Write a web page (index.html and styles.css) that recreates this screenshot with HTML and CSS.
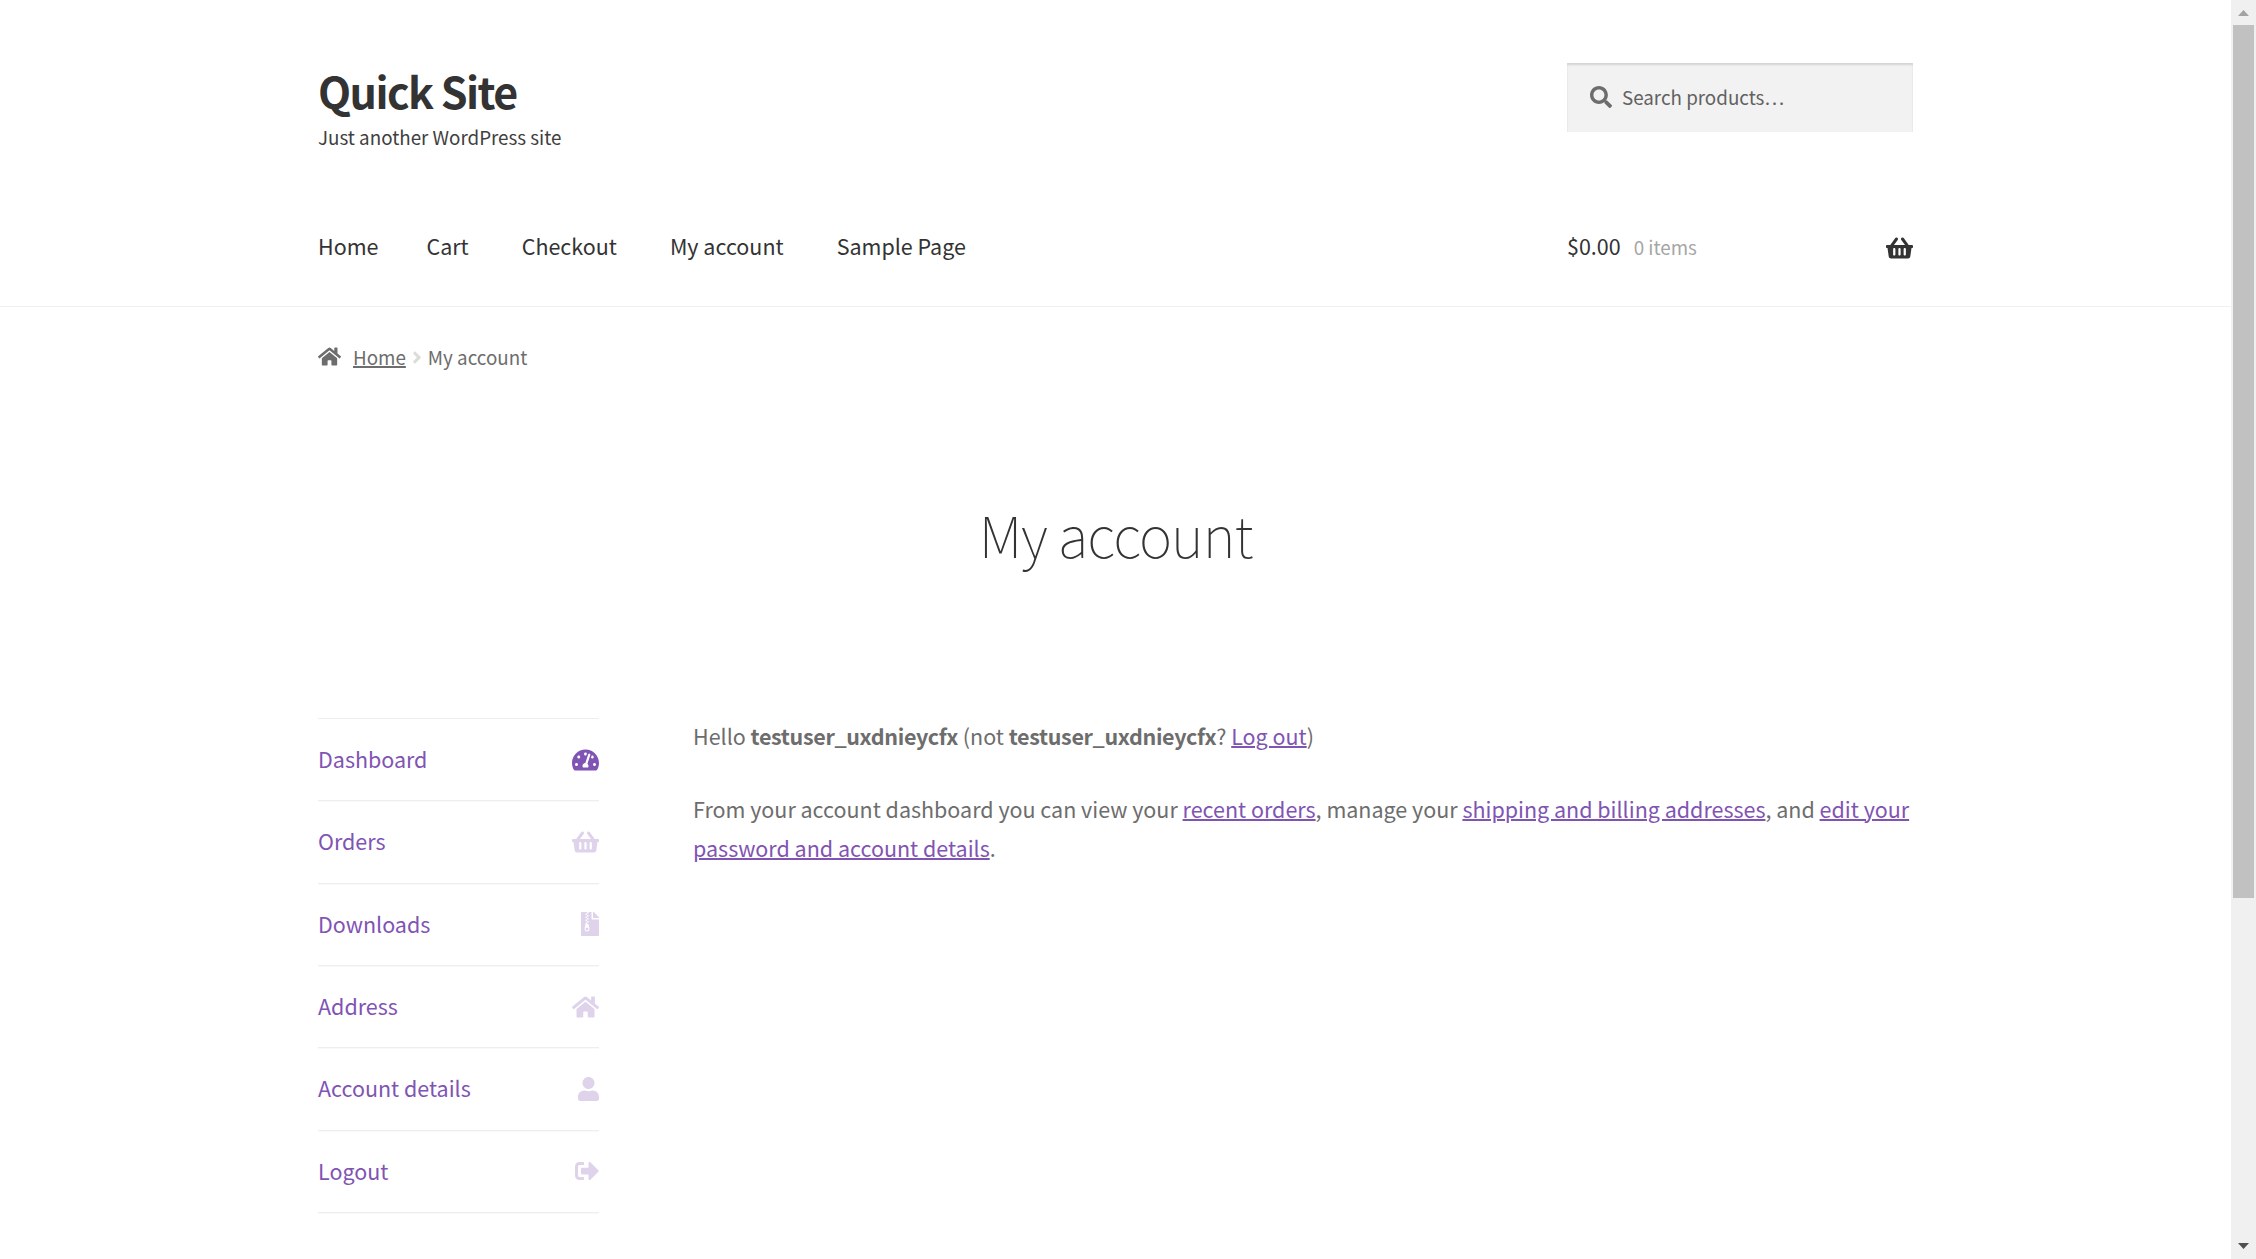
FILE: index.html
```html
<!DOCTYPE html>
<html lang="en">
<head>
<meta charset="utf-8">
<title>My account – Quick Site</title>
<link rel="stylesheet" href="styles.css">
</head>
<body>
<svg class="sprite" aria-hidden="true">
  <symbol id="search" viewBox="0 0 512 512"><path d="M505 442.7L405.3 343c-4.5-4.5-10.6-7-17-7H372c27.6-35.3 44-79.7 44-128C416 93.1 322.9 0 208 0S0 93.1 0 208s93.1 208 208 208c48.3 0 92.7-16.4 128-44v16.3c0 6.4 2.5 12.5 7 17l99.7 99.7c9.4 9.4 24.6 9.4 33.9 0l28.3-28.3c9.4-9.4 9.4-24.6.1-34zM208 336c-70.7 0-128-57.2-128-128 0-70.7 57.2-128 128-128 70.7 0 128 57.2 128 128 0 70.7-57.2 128-128 128z"/></symbol>
  <symbol id="basket" viewBox="0 0 576 512"><path d="M576 216v16c0 13.255-10.745 24-24 24h-8l-26.113 182.788C514.509 462.435 494.257 480 470.37 480H105.63c-23.887 0-44.139-17.565-47.518-41.212L32 256h-8c-13.255 0-24-10.745-24-24v-16c0-13.255 10.745-24 24-24h67.341l106.78-146.821c10.395-14.292 30.407-17.453 44.701-7.058 14.293 10.395 17.453 30.408 7.058 44.701L170.477 192h235.046L326.12 82.821c-10.395-14.292-7.234-34.306 7.059-44.701 14.291-10.395 34.306-7.235 44.701 7.058L484.659 192H552c13.255 0 24 10.745 24 24zM312 392V280c0-13.255-10.745-24-24-24s-24 10.745-24 24v112c0 13.255 10.745 24 24 24s24-10.745 24-24zm112 0V280c0-13.255-10.745-24-24-24s-24 10.745-24 24v112c0 13.255 10.745 24 24 24s24-10.745 24-24zm-224 0V280c0-13.255-10.745-24-24-24s-24 10.745-24 24v112c0 13.255 10.745 24 24 24s24-10.745 24-24z"/></symbol>
  <symbol id="home" viewBox="0 0 576 512"><path d="M280.37 148.26L96 300.11V464a16 16 0 0 0 16 16l112.06-.29a16 16 0 0 0 15.92-16V368a16 16 0 0 1 16-16h64a16 16 0 0 1 16 16v95.64a16 16 0 0 0 16 16.05L464 480a16 16 0 0 0 16-16V300L295.67 148.26a12.19 12.19 0 0 0-15.3 0zM571.6 251.47L488 182.56V44.05a12 12 0 0 0-12-12h-56a12 12 0 0 0-12 12v72.61L318.47 43a48 48 0 0 0-61 0L4.34 251.47a12 12 0 0 0-1.6 16.9l25.5 31A12 12 0 0 0 45.15 301l235.22-193.74a12.19 12.19 0 0 1 15.3 0L530.9 301a12 12 0 0 0 16.9-1.6l25.5-31a12 12 0 0 0-1.7-16.93z"/></symbol>
  <symbol id="angle" viewBox="0 0 256 512"><path d="M224.3 273l-136 136c-9.4 9.4-24.6 9.4-33.9 0l-22.6-22.6c-9.4-9.4-9.4-24.6 0-33.9l96.4-96.4-96.4-96.4c-9.4-9.4-9.4-24.6 0-33.9L54.3 103c9.4-9.4 24.6-9.4 33.9 0l136 136c9.5 9.4 9.5 24.6.1 34z"/></symbol>
  <symbol id="gauge" viewBox="0 0 576 512"><path d="M288 32C128.94 32 0 160.94 0 320c0 52.8 14.25 102.26 39.06 144.8 5.61 9.62 16.3 15.2 27.44 15.2h443c11.14 0 21.83-5.58 27.44-15.2C561.75 422.26 576 372.8 576 320c0-159.06-128.94-288-288-288zm0 64c14.71 0 26.58 10.13 30.32 23.65-1.11 2.26-2.64 4.23-3.45 6.67l-9.22 27.67c-5.13 3.49-10.97 6.01-17.64 6.01-17.67 0-32-14.33-32-32S270.33 96 288 96zM96 384c-17.67 0-32-14.33-32-32s14.33-32 32-32 32 14.33 32 32-14.33 32-32 32zm48-160c-17.67 0-32-14.33-32-32s14.33-32 32-32 32 14.33 32 32-14.33 32-32 32zm246.77-72.41l-61.33 184C343.13 347.33 352 364.54 352 384c0 11.72-3.38 22.55-8.88 32H232.88c-5.5-9.45-8.88-20.28-8.88-32 0-33.94 26.5-61.43 59.9-63.59l61.34-184.01c4.17-12.56 17.73-19.45 30.36-15.17 12.57 4.19 19.35 17.79 15.17 30.36zm14.66 57.2l15.52-46.55c3.47-1.29 7.13-2.23 11.05-2.23 17.67 0 32 14.33 32 32s-14.33 32-32 32c-11.38-.01-20.89-6.28-26.57-15.22zM480 384c-17.67 0-32-14.33-32-32s14.33-32 32-32 32 14.33 32 32-14.33 32-32 32z"/></symbol>
  <symbol id="archive" viewBox="0 0 384 512"><path d="M377 105L279.1 7c-4.5-4.5-10.6-7-17-7H256v128h128v-6.1c0-6.3-2.5-12.4-7-16.9zM128.4 336c-17.9 0-32.4 12.1-32.4 27 0 15 14.6 27 32.5 27s32.4-12.1 32.4-27-14.6-27-32.500-27zM224 136V0h-63.6v32h-32V0H24C10.7 0 0 10.7 0 24v464c0 13.3 10.7 24 24 24h336c13.3 0 24-10.7 24-24V160H248c-13.2 0-24-10.8-24-24zM95.9 32h32v32h-32V32zm32.3 384c-33.2 0-58-30.4-51.4-62.9L96.4 256v-32h32v-32h-32v-32h32v-32h-32V96h32V64h32v32h-32v32h32v32h-32v32h32v32h-32v32h22.1c5.7 0 10.7 4.1 11.8 9.7l17.3 87.7c6.4 32.4-18.4 62.6-51.5 62.6z"/></symbol>
  <symbol id="user" viewBox="0 0 448 512"><path d="M224 256c70.7 0 128-57.3 128-128S294.7 0 224 0 96 57.3 96 128s57.3 128 128 128zm89.6 32h-16.7c-22.2 10.2-46.9 16-72.9 16s-50.6-5.8-72.9-16h-16.7C60.2 288 0 348.2 0 422.4V464c0 26.5 21.5 48 48 48h352c26.5 0 48-21.5 48-48v-41.6c0-74.2-60.2-134.4-134.4-134.4z"/></symbol>
  <symbol id="signout" viewBox="0 0 512 512"><path d="M497 273L329 441c-15 15-41 4.5-41-17v-96H152c-13.3 0-24-10.7-24-24v-96c0-13.3 10.7-24 24-24h136V88c0-21.4 25.9-32 41-17l168 168c9.3 9.4 9.3 24.6 0 34zM192 436v-40c0-6.6-5.4-12-12-12H96c-17.7 0-32-14.3-32-32V160c0-17.7 14.3-32 32-32h84c6.6 0 12-5.4 12-12V76c0-6.6-5.4-12-12-12H96c-53 0-96 43-96 96v192c0 53 43 96 96 96h84c6.6 0 12-5.4 12-12z"/></symbol>
</svg>
<div class="window">
  <div class="page">
    <header class="header">
      <div class="wrap header-top">
        <div class="brand">
          <div class="site-title">Quick Site</div>
          <p class="tagline">Just another WordPress site</p>
        </div>
        <div class="search"><svg class="search-icon"><use href="#search"/></svg><span>Search products…</span></div>
      </div>
      <div class="wrap header-nav">
        <nav class="nav"><a>Home</a><a>Cart</a><a>Checkout</a><a>My account</a><a>Sample Page</a></nav>
        <div class="cart"><span>$0.00</span><span class="count">0 items</span><svg class="cart-icon"><use href="#basket"/></svg></div>
      </div>
    </header>
    <div class="wrap">
      <nav class="crumbs"><svg class="crumb-home"><use href="#home"/></svg><a>Home</a><svg class="crumb-sep"><use href="#angle"/></svg><span>My account</span></nav>
      <h1 class="title">My account</h1>
      <div class="account">
        <ul class="menu">
          <li class="active"><a>Dashboard</a><svg class="i576"><use href="#gauge"/></svg></li>
          <li><a>Orders</a><svg class="i576"><use href="#basket"/></svg></li>
          <li><a>Downloads</a><svg class="i384"><use href="#archive"/></svg></li>
          <li><a>Address</a><svg class="i576"><use href="#home"/></svg></li>
          <li><a>Account details</a><svg class="i448"><use href="#user"/></svg></li>
          <li><a>Logout</a><svg class="i512"><use href="#signout"/></svg></li>
        </ul>
        <main class="content">
          <p>Hello <strong>testuser_uxdnieycfx</strong> (not <strong>testuser_uxdnieycfx</strong>? <a>Log out</a>)</p>
          <p>From your account dashboard you can view your <a>recent orders</a>, manage your <a>shipping and billing addresses</a>, and <a>edit your<br>password and account details</a>.</p>
        </main>
      </div>
    </div>
  </div>
  <div class="scrollbar">
    <svg class="arrow up" viewBox="0 0 11 6"><path d="M5.5 0L11 6H0z"/></svg>
    <div class="thumb"></div>
    <svg class="arrow down" viewBox="0 0 11 6"><path d="M0 0h11L5.5 6z"/></svg>
  </div>
</div>
</body>
</html>
```
FILE: styles.css
```css
* { box-sizing: border-box; }
body {
  margin: 0;
  background: #fff;
  color: #6d6d6d;
  font-family: "Noto Sans CJK SC", "Open Sans", sans-serif;
  font-size: 21.49px;
  line-height: 39px;
  white-space: nowrap;
}
p, h1, ul { margin: 0; padding: 0; }
svg { display: block; fill: currentColor; flex: none; }
.sprite { position: absolute; width: 0; height: 0; }
.window { display: grid; grid-template-columns: 1fr 25px; height: 1259px; overflow: hidden; }
.wrap { width: 1595px; margin: 0 auto; }

.header { height: 307px; border-bottom: 1px solid #f0f0f0; color: #333; }
.header-top { display: flex; justify-content: space-between; align-items: flex-start; height: 226px; padding-top: 63px; }
.brand { padding-top: 3px; }
.site-title { font-size: 43px; line-height: 48px; font-weight: 700; letter-spacing: -1.55px; }
.tagline { margin-top: 8px; font-size: 18.8px; line-height: 30px; color: #404040; }
.search {
  display: flex; align-items: center; gap: 10px;
  width: 346px; height: 69px; padding: 0 0 2px 23px;
  background: #f2f2f2; color: #616161; font-size: 18.8px;
  box-shadow: inset 0 2px 2px rgba(0, 0, 0, .125);
}
.search-icon { width: 22px; height: 22px; color: #6d6d6d; }
.header-nav { display: flex; justify-content: space-between; line-height: 40px; }
.nav { display: flex; gap: 53px; }
.nav a:first-child { margin-right: -5px; }
.cart { display: flex; align-items: baseline; width: 346px; }
.count { margin-left: 13px; font-size: 18.8px; color: #a6a6a6; }
.cart-icon { width: 27px; height: 24px; margin-left: auto; align-self: center; margin-top: 2px; }

.crumbs { display: flex; align-items: center; height: 39px; margin-top: 30px; font-size: 18.8px; }
.crumb-home { width: 23px; height: 21px; margin-right: 12px; }
.crumb-sep { width: 10px; height: 19px; margin: 2px 6px 0 6px; color: #dcdcdc; }
a { text-decoration-thickness: 2px; }
.crumbs a, .content a { text-decoration-line: underline; }

.title { margin-top: 117px; font-size: 56.5px; line-height: 80px; font-weight: 100; text-align: center; color: #333; letter-spacing: -1px; }

.account { display: flex; gap: 94px; margin-top: 145px; }
.menu { width: 281px; list-style: none; border-top: 1px solid #eee; color: #7f54b3; }
.menu li { display: flex; justify-content: space-between; align-items: center; height: 82.33px; border-bottom: 1px solid #eee; box-shadow: 0 1px #f9f9f9; }
.menu a { padding-bottom: 2px; }
.menu svg { height: 24px; opacity: .25; }
.menu .active svg { opacity: 1; }
.i576 { width: 27px; }
.i512 { width: 24px; }
.i448 { width: 21px; }
.i384 { width: 18px; }
.content { margin-top: -2px; }
.content p { margin-bottom: 34px; }
.content a { color: #7f54b3; }
.content strong { font-weight: 700; letter-spacing: -.33px; }

.scrollbar { display: flex; flex-direction: column; align-items: center; padding: 10px 0; background: #f0f0f0; }
.thumb { width: 21px; height: 873px; margin: 9px 0 auto; background: #c1c1c1; }
.arrow { width: 11px; height: 6px; }
.up { color: #a3a3a3; }
.down { color: #505050; }
```
